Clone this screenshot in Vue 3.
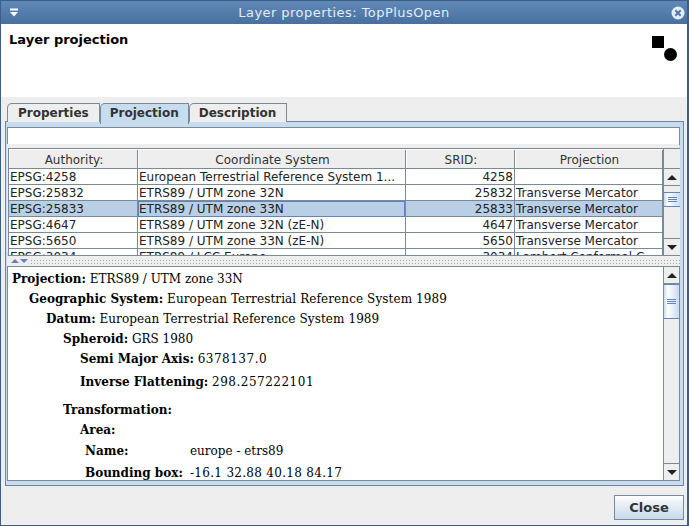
<template>
  <div class="window">
    <header class="titlebar">
      <svg class="menu-icon" width="10" height="9" viewBox="0 0 10 9">
        <path d="M1 0.5h8v2h-8z M1 4h8l-4 4.5z" fill="#fff" />
      </svg>
      <span class="title">Layer properties: TopPlusOpen</span>
      <svg class="close-icon" width="14" height="14" viewBox="0 0 14 14">
        <circle cx="7" cy="7" r="6.5" fill="#e4ecf5" />
        <path d="M4.3 4.3l5.4 5.4M9.7 4.3l-5.4 5.4" stroke="#4f78a8" stroke-width="2" />
      </svg>
    </header>

    <section class="banner">
      <h1>Layer projection</h1>
      <div class="logo">
        <span class="square"></span>
        <span class="dot"></span>
      </div>
    </section>

    <main class="body">
      <nav class="tabs">
        <span v-for="tab in tabs" :key="tab" class="tab" :class="{ active: tab === 'Projection' }">{{ tab }}</span>
      </nav>

      <div class="panel">
        <div class="search"></div>

        <div class="table-wrap">
          <div class="table">
            <div class="row head">
              <div v-for="col in columns" :key="col" class="cell">{{ col }}</div>
            </div>
            <div class="rows">
              <div v-for="row in rows" :key="row.id" class="row" :class="{ selected: row.id === 'EPSG:25833' }">
                <div class="cell">{{ row.id }}</div>
                <div class="cell" :class="{ focus: row.id === 'EPSG:25833' }">{{ row.name }}</div>
                <div class="cell num">{{ row.srid }}</div>
                <div class="cell">{{ row.proj }}</div>
              </div>
            </div>
          </div>
          <div class="scroll-col">
            <div class="corner"></div>
            <div class="scrollbar">
              <div class="arrow"><span class="up"></span></div>
              <div class="track small">
                <div class="thumb small"><i></i><i></i><i></i></div>
              </div>
              <div class="arrow"><span class="down"></span></div>
            </div>
          </div>
        </div>

        <div class="divider">
          <span class="up"></span>
          <span class="down"></span>
          <div class="dots"></div>
        </div>

        <div class="details">
          <div class="doc">
            <p class="l0"><b>Projection:</b> ETRS89 / UTM zone 33N</p>
            <p class="l1"><b>Geographic System:</b> <span class="val">European Terrestrial Reference System 1989</span></p>
            <p class="l2"><b>Datum:</b> <span class="val">European Terrestrial Reference System 1989</span></p>
            <p class="l3"><b>Spheroid:</b> GRS 1980</p>
            <p class="l4"><b>Semi Major Axis:</b> <span class="digits">6378137.0</span></p>
            <p class="l4 gap-s"><b>Inverse Flattening:</b> <span class="digits">298.257222101</span></p>
            <p class="l3 gap-l"><b>Transformation:</b></p>
            <p class="l4"><b>Area:</b></p>
            <p class="pair name"><b>Name:</b><span>europe - etrs89</span></p>
            <p class="pair gap-s"><b>Bounding box:</b><span class="bbox">-16.1 32.88 40.18 84.17</span></p>
          </div>
          <div class="scrollbar">
            <div class="arrow"><span class="up"></span></div>
            <div class="track">
              <div class="thumb"><i></i><i></i><i></i></div>
            </div>
            <div class="arrow"><span class="down"></span></div>
          </div>
        </div>
      </div>

      <footer class="actions">
        <button class="close-btn">Close</button>
      </footer>
    </main>
  </div>
</template>

<script setup>
const tabs = ["Properties", "Projection", "Description"];
const columns = ["Authority:", "Coordinate System", "SRID:", "Projection"];
const rows = [
  { id: "EPSG:4258", name: "European Terrestrial Reference System 1...", srid: "4258", proj: "" },
  { id: "EPSG:25832", name: "ETRS89 / UTM zone 32N", srid: "25832", proj: "Transverse Mercator" },
  { id: "EPSG:25833", name: "ETRS89 / UTM zone 33N", srid: "25833", proj: "Transverse Mercator" },
  { id: "EPSG:4647", name: "ETRS89 / UTM zone 32N (zE-N)", srid: "4647", proj: "Transverse Mercator" },
  { id: "EPSG:5650", name: "ETRS89 / UTM zone 33N (zE-N)", srid: "5650", proj: "Transverse Mercator" },
  { id: "EPSG:3034", name: "ETRS89 / LCC Europe", srid: "3034", proj: "Lambert Conformal C..." },
];
</script>

<style>
html,
body {
  margin: 0;
  background: #eeeeee;
}
</style>

<style scoped>
.window {
  width: 689px;
  height: 526px;
  box-sizing: border-box;
  display: flex;
  flex-direction: column;
  border: 1px solid #3b5f88;
  border-top: 0;
  border-right-width: 2px;
  font-family: "DejaVu Sans", sans-serif;
  font-size: 12px;
  color: #222;
  background: #eeeeee;
  overflow: hidden;
}

.titlebar {
  height: 24px;
  flex: none;
  display: flex;
  align-items: center;
  justify-content: space-between;
  padding: 0 2px 0 8px;
  background: linear-gradient(#6189b8, #47709f);
  border-top: 1px solid #3b5f88;
  box-sizing: border-box;
}

.title {
  color: #e4ecf5;
  font-size: 13px;
  font-weight: 500;
  letter-spacing: 0.45px;
  padding-right: 2px;
}

.banner {
  height: 73px;
  flex: none;
  background: #fff;
  display: flex;
  justify-content: space-between;
  padding: 8px 10px 0 8px;
  box-sizing: border-box;
}

.banner h1 {
  margin: 0;
  font-size: 13px;
  line-height: 15px;
  font-weight: 700;
  color: #000;
}

.logo {
  width: 25px;
  height: 25px;
  margin-top: 4px;
  display: flex;
  flex-wrap: wrap;
  align-content: flex-start;
}

.square {
  width: 12px;
  height: 12px;
  background: #000;
}

.dot {
  width: 13px;
  height: 13px;
  margin-left: 12px;
  border-radius: 50%;
  background: #000;
}

.body {
  flex: 1;
  min-height: 0;
  display: flex;
  flex-direction: column;
  padding: 6px 3px 0 4px;
}

.tabs {
  display: flex;
  height: 18px;
  padding-left: 2px;
  flex: none;
  position: relative;
  z-index: 1;
}

.tab {
  box-sizing: border-box;
  height: 19px;
  padding: 0 10px;
  line-height: 18px;
  font-size: 12px;
  font-weight: 700;
  color: #333;
  border: 1px solid #7a8a99;
  border-bottom: 0;
  border-top-left-radius: 5px 5px;
  background: #eeeeee;
}

.tab.active {
  background: #c8dcf0;
  height: 21px;
  padding: 0 9px;
}

.tab:last-child {
  padding-left: 9px;
}

.panel {
  flex: none;
  height: 365px;
  box-sizing: border-box;
  border: 1px solid #71869c;
  padding: 5px 3px 4px 1px;
  display: flex;
  flex-direction: column;
  background: #c8dcf0;
}

.search {
  height: 18px;
  flex: none;
  background: #fff;
  border: 1px solid #7a8a99;
  box-sizing: border-box;
}

.table-wrap {
  margin: 3px 0 0 1px;
  height: 108px;
  flex: none;
  display: flex;
  border: 1px solid #7a8a99;
  border-width: 1px 0 1px 1px;
  box-sizing: border-box;
  background: #eeeeee;
  box-shadow: -1px -4px 0 #eeeeee;
}

.table {
  width: 654px;
  flex: none;
  overflow: hidden;
}

.row {
  display: grid;
  grid-template-columns: 129px 268px 109px 148px;
  height: 16px;
  background: #fff;
  line-height: 17px;
  box-sizing: border-box;
  border-bottom: 1px solid #7a8a99;
}

.row.selected {
  background: #b8cfe5;
}

.row.head {
  height: 20px;
  background: #eeeeee;
  line-height: 20px;
  border-top: 1px solid #fff;
  border-bottom: 1px solid #7a8a99;
  color: #333;
}

.head .cell {
  text-align: center;
  border-left: 1px solid #fff;
  padding-left: 2px;
}

.rows {
  height: 86px;
  overflow: hidden;
}

.cell {
  box-sizing: border-box;
  padding: 0 1px;
  white-space: nowrap;
  overflow: hidden;
  border-right: 1px solid #7a8a99;
}

.cell.num {
  text-align: right;
}

.cell.focus {
  box-shadow: inset 0 0 0 1px #6382be;
  height: 16px;
}

.scroll-col {
  flex: 1;
  display: flex;
  flex-direction: column;
}

.corner {
  height: 20px;
  flex: none;
  box-sizing: border-box;
  border-bottom: 1px solid #7a8a99;
  border-left: 1px solid #7a8a99;
}

.scrollbar {
  width: 16px;
  flex: none;
  display: flex;
  flex-direction: column;
  box-sizing: border-box;
  border-left: 1px solid #7a8a99;
  background: #eeeeee;
  align-self: stretch;
  min-height: 0;
}

.scroll-col .scrollbar {
  flex: 1;
  width: auto;
}

.arrow {
  height: 16px;
  flex: none;
  display: flex;
  align-items: center;
  justify-content: center;
  background: #eeeeee;
}

.track {
  flex: 1;
  box-sizing: border-box;
  border-top: 1px solid #7a8a99;
  border-bottom: 1px solid #7a8a99;
  min-height: 0;
}

.thumb {
  height: 35px;
  box-sizing: border-box;
  border-top: 1px solid #6382be;
  border-bottom: 1px solid #6382be;
  background: linear-gradient(90deg, #c8dcf0, #fff 25%, #c8dcf0);
  display: flex;
  flex-direction: column;
  gap: 1px;
  align-items: center;
  justify-content: center;
}

.thumb.small {
  height: 15px;
  margin-top: 6px;
}

.thumb i {
  display: block;
  width: 9px;
  height: 1px;
  background: #6382be;
}

.up,
.down {
  display: block;
  width: 0;
  height: 0;
  border-left: 5px solid transparent;
  border-right: 5px solid transparent;
}

.up {
  border-bottom: 5px solid #222;
}

.down {
  border-top: 5px solid #222;
}

.divider {
  height: 10px;
  flex: none;
  display: flex;
  align-items: center;
  gap: 1px;
  padding-left: 4px;
  box-sizing: border-box;
  background: #eeeeee;
}

.divider .up {
  border-bottom-color: #6382be;
  border-left-width: 4px;
  border-right-width: 4px;
  border-bottom-width: 4px;
}

.divider .down {
  border-top-color: #6382be;
  border-left-width: 4px;
  border-right-width: 4px;
  border-top-width: 4px;
}

.dots {
  flex: 1;
  height: 5px;
  margin-left: 1px;
  background-image: radial-gradient(#a8a8a8 0.7px, transparent 0.8px);
  background-size: 3px 3px;
}

.details {
  flex: 1;
  min-height: 0;
  display: flex;
  border: 1px solid #7a8a99;
  background: #fff;
}

.doc {
  flex: 1;
  min-width: 0;
  overflow: hidden;
  padding: 5px 0 0 4px;
  font-family: "DejaVu Serif", serif;
  font-size: 12px;
  color: #000;
}

.doc p {
  margin: 0 0 5px;
  line-height: 15px;
  white-space: nowrap;
}

.doc b {
  font-weight: 700;
}

.val {
  letter-spacing: 0.1px;
}

.digits {
  letter-spacing: 0.5px;
}

.bbox {
  letter-spacing: 0.3px;
}

.l1 { padding-left: 17px; }
.l2 { padding-left: 34px; }
.l3 { padding-left: 51px; }
.l4 { padding-left: 68px; }

.doc .gap-s {
  margin-top: 7px;
}

.doc .l4.gap-s {
  margin-top: 8px;
}

.doc .gap-l {
  margin-top: 13px;
}

.doc .name {
  margin-top: 6px;
}

.pair {
  display: grid;
  grid-template-columns: 105px 1fr;
  padding-left: 73px;
}

.actions {
  flex: 1;
  display: flex;
  justify-content: flex-end;
  align-items: flex-start;
  padding-top: 9px;
}

.close-btn {
  width: 70px;
  height: 25px;
  padding: 0;
  font: 700 13px "DejaVu Sans", sans-serif;
  color: #333;
  border: 1px solid #7a8a99;
  background: linear-gradient(#fff, #eef3f9 25%, #c6d9ec);
}
</style>
